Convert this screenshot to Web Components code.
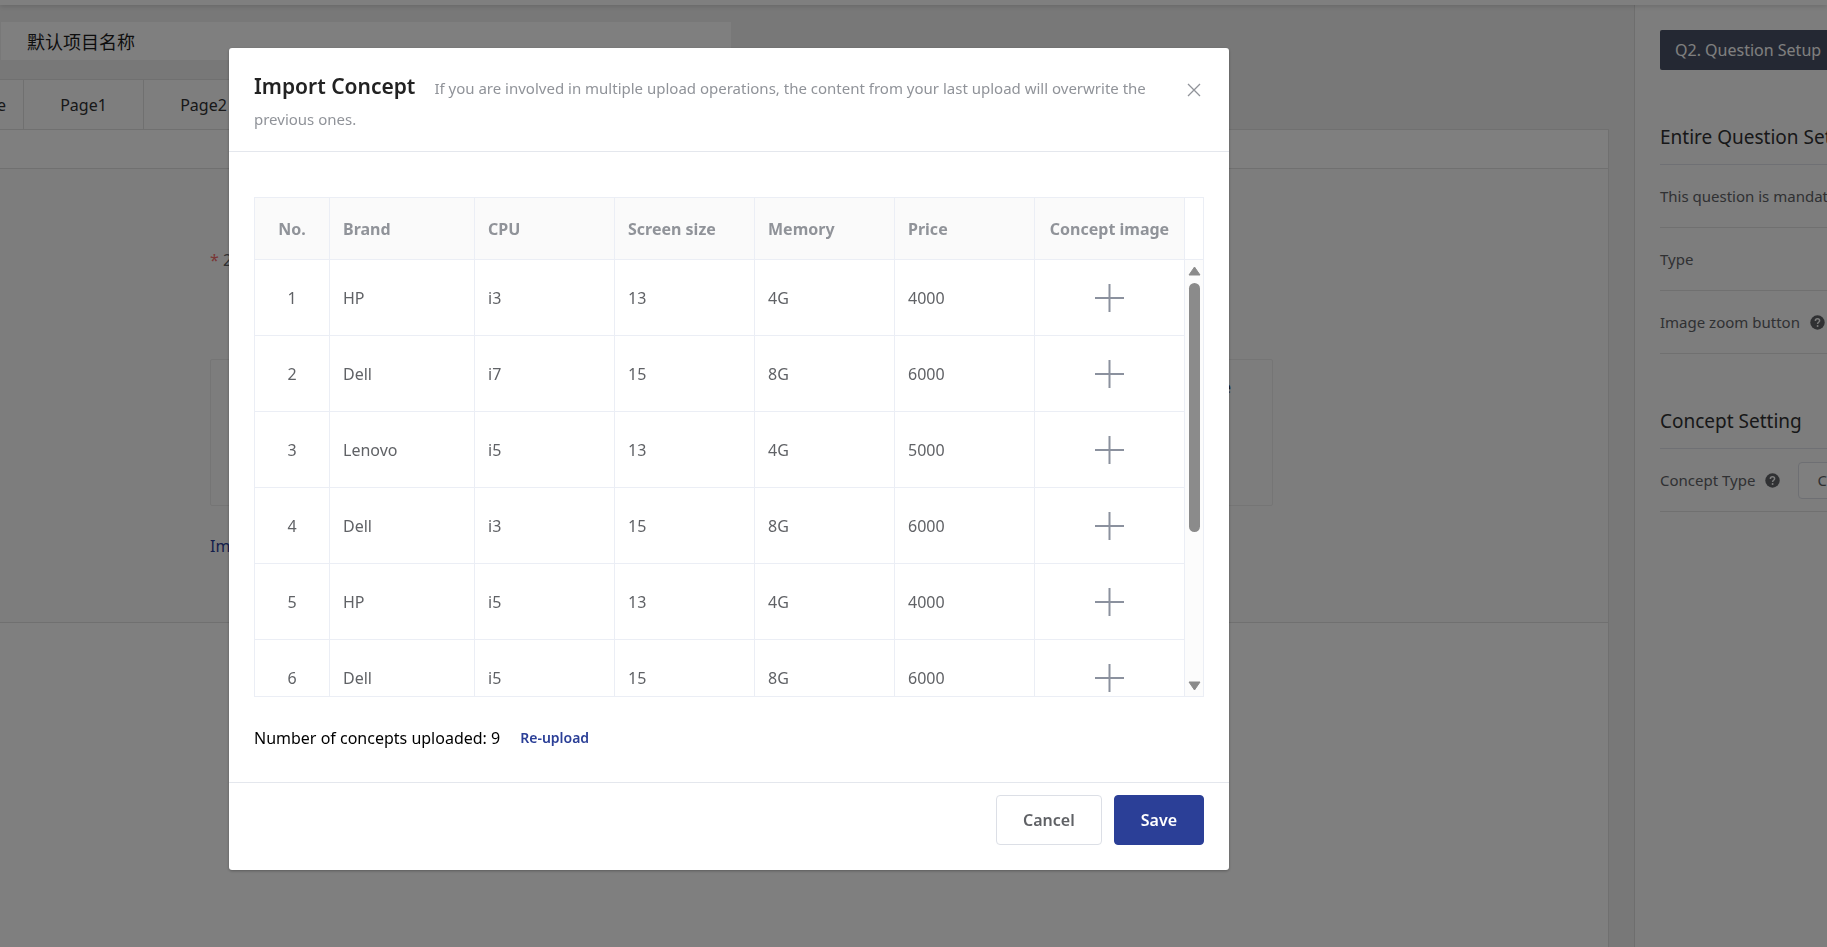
<!DOCTYPE html>
<html lang="en">
<head>
<meta charset="utf-8">
<title>Import Concept</title>
<style>
  html, body { margin: 0; }
  body {
    font: 16px/24px "Noto Sans", "Noto Sans CJK SC", sans-serif;
    color: #303133;
    background: #f0f0f0;
    overflow: hidden;
  }
</style>
</head>
<body>
<survey-app></survey-app>

<script>
const define = (name, html, setup) => {
  const template = document.createElement('template');
  template.innerHTML = html;
  customElements.define(name, class extends HTMLElement {
    constructor() {
      super();
      this.attachShadow({ mode: 'open' }).append(template.content.cloneNode(true));
    }
    connectedCallback() {
      if (setup) setup(this, this.shadowRoot);
    }
  });
};

/* Round question mark beside a setting label */
define('help-icon', `
  <style>
    :host { display: inline-flex; width: 15px; height: 15px; color: #606266; }
    svg { width: 100%; height: 100%; }
  </style>
  <svg viewBox="0 0 15 15" aria-hidden="true">
    <circle cx="7.5" cy="7.5" r="7.2" fill="currentColor"/>
    <path d="M5.4 5.9c0-1.3.9-2.1 2.1-2.1s2.1.8 2.1 1.9c0 1.5-2 1.6-2 3.2" fill="none" stroke="#fafafa" stroke-width="1.5"/>
    <circle cx="7.6" cy="11" r=".95" fill="#fafafa"/>
  </svg>`);

define('page-tabs', `
  <style>
    :host { display: flex; align-self: flex-start; border-top: 1px solid #e0e0e0; height: 49px; }
    a {
      box-sizing: border-box; width: 120px; flex: none;
      display: flex; align-items: center; justify-content: center;
      color: inherit; text-decoration: none;
      background: #fcfcfc; border-right: 1px solid #e0e0e0;
    }
    a.cut { width: 24px; justify-content: flex-end; padding-right: 17px; overflow: hidden; }
  </style>
  <a class="cut" href="#home">Home</a>
  <a href="#page1">Page1</a>
  <a href="#page2">Page2</a>`);

define('question-card', `
  <style>
    :host { display: flex; flex-direction: column; flex: 1; border: 1px solid #e0e0e0; border-width: 1px 1px 0 0; background: #fff; }
    header { height: 38px; border-bottom: 1px solid #e0e0e0; }
    section { background: #fafafa; border-bottom: 1px solid #e0e0e0; padding: 79px 335px 64px 210px; }
    p { margin: 0; color: #606266; }
    p b { color: #f56c6c; font-weight: 400; }
    .box {
      box-sizing: border-box; height: 147px; margin: 87px 0 28px; padding: 15px 41px;
      border: 1px solid #ebebeb; border-radius: 2px; text-align: right;
    }
    a { display: block; color: #2b3f97; text-decoration: none; }
  </style>
  <header></header>
  <section>
    <p><b>*</b> 2</p>
    <div class="box">Price</div>
    <a href="#import">Import</a>
  </section>`);

define('project-editor', `
  <style>
    :host { display: flex; flex-direction: column; flex: 1; min-width: 0; padding: 17px 25px 0 0; }
    input {
      box-sizing: border-box; width: 730px; max-width: 100%; height: 38px; margin: 0 0 19px 1px; padding: 0 26px;
      border: 0; background: #fff; color: #1c1c1c; font: inherit; font-size: 18px;
    }
  </style>
  <input type="text" aria-label="Project name" value="默认项目名称">
  <page-tabs></page-tabs>
  <question-card></question-card>`);

define('setting-row', `
  <style>
    :host {
      box-sizing: border-box; display: flex; align-items: center; height: 63px;
      border-bottom: 1px solid #e0e0e0; font-size: 15px; color: #606266;
    }
    slot { display: flex; align-items: center; gap: 10px; }
  </style>
  <slot></slot>`);

define('setting-section', `
  <style>
    :host { display: block; }
    h3 { margin: 0; padding-bottom: 12px; border-bottom: 1px solid #dfe0e8; font-size: 19px; line-height: 30px; font-weight: 400; }
  </style>
  <h3><slot name="title"></slot></h3>
  <slot></slot>`);

define('settings-panel', `
  <style>
    :host {
      box-sizing: border-box; flex: none; width: 193px; overflow: hidden; white-space: nowrap;
      border-left: 1px solid #dcdcdc; background: #fafafa;
    }
    .inner { width: 320px; padding: 25px; }
    .setup {
      display: block; width: 100%; height: 40px; margin-bottom: 52px; padding: 0 15px; text-align: left;
      border: 0; border-radius: 2px; background: #485066; color: #fff; font: inherit;
    }
    setting-section + setting-section { margin-top: 52px; }
    select {
      width: 160px; height: 37px; margin-left: 8px; padding: 0 18px; appearance: none;
      border: 1px solid #dcdfe6; border-radius: 4px; background: #fff; color: #606266; font: inherit;
    }
  </style>
  <div class="inner">
    <button class="setup" type="button">Q2. Question Setup</button>
    <setting-section>
      <span slot="title">Entire Question Setting</span>
      <setting-row>This question is mandatory</setting-row>
      <setting-row>Type</setting-row>
      <setting-row><span>Image zoom button</span><help-icon></help-icon></setting-row>
    </setting-section>
    <setting-section>
      <span slot="title">Concept Setting</span>
      <setting-row><label for="ctype">Concept Type</label><help-icon></help-icon>
        <select id="ctype"><option>Custom</option></select></setting-row>
    </setting-section>
  </div>`);

define('scroll-rail', `
  <style>
    :host { display: flex; flex-direction: column; }
    .cap { height: 61px; border-bottom: 1px solid #ebeef5; background: #fff; }
    .track {
      flex: 1; display: flex; flex-direction: column; align-items: center; justify-content: space-between;
      padding: 6px 0 5px; background: #fcfcfc;
    }
    .thumb { width: 11px; height: 249px; margin: 7px 0 auto; border-radius: 6px; background: #8b8b8b; }
    svg { width: 13px; height: 10px; fill: #8b8b8b; stroke: #8b8b8b; stroke-linejoin: round; }
  </style>
  <div class="cap"></div>
  <div class="track">
    <svg viewBox="0 0 13 10"><path d="M6.5 1 12 9H1z"/></svg>
    <div class="thumb"></div>
    <svg viewBox="0 0 13 10"><path d="M6.5 9 12 1H1z"/></svg>
  </div>`);

define('concept-table', `
  <style>
    :host {
      box-sizing: border-box; display: grid; grid-template-columns: 1fr 18px; height: 500px;
      border: 1px solid #ebeef5; background: #fff;
    }
    .view { overflow: hidden; }
    table { width: 100%; table-layout: fixed; border-collapse: separate; border-spacing: 0; color: #606266; }
    th, td {
      box-sizing: border-box; padding: 0 13px; text-align: left; white-space: nowrap;
      border: solid #ebeef5; border-width: 0 1px 1px 0;
    }
    th { height: 62px; background: #fafafa; color: #909399; font-weight: 700; }
    td { height: 76px; }
    .n { width: 75px; text-align: center; }
    .brand { width: 145px; }
    .img { width: 150px; text-align: center; }
    button { display: block; margin: 0 auto; padding: 0; border: 0; background: none; color: #8b919e; }
    svg { display: block; width: 30px; height: 30px; }
  </style>
  <div class="view">
    <table>
      <thead><tr>
        <th class="n">No.</th><th class="brand">Brand</th><th>CPU</th><th>Screen size</th>
        <th>Memory</th><th>Price</th><th class="img">Concept image</th>
      </tr></thead>
      <tbody></tbody>
    </table>
  </div>
  <scroll-rail></scroll-rail>`, (host, root) => {
  const concepts = [
    ['HP', 'i3', 13, '4G', 4000],
    ['Dell', 'i7', 15, '8G', 6000],
    ['Lenovo', 'i5', 13, '4G', 5000],
    ['Dell', 'i3', 15, '8G', 6000],
    ['HP', 'i5', 13, '4G', 4000],
    ['Dell', 'i5', 15, '8G', 6000],
  ];
  root.querySelector('tbody').innerHTML = concepts.map((row, i) => `<tr>
    <td class="n">${i + 1}</td>${row.map(v => `<td>${v}</td>`).join('')}
    <td class="img"><button type="button" aria-label="Add image">
      <svg viewBox="0 0 30 30"><path d="M0 15h29M14.500 1v28" stroke="currentColor" stroke-width="2"/></svg>
    </button></td></tr>`).join('');
});

define('dialog-button', `
  <style>
    :host { display: block; }
    button {
      height: 50px; padding: 0 26px; border: 1px solid #dcdfe6; border-radius: 4px;
      background: #fff; color: #606266; font: inherit; font-weight: 600;
    }
    :host([primary]) button { background: #2b3f97; border-color: #2b3f97; color: #fff; }
  </style>
  <button type="button"><slot></slot></button>`);

define('import-dialog', `
  <style>
    :host { display: block; background: #fff; border-radius: 3px; box-shadow: 0 1px 3px rgba(0, 0, 0, .3); }
    header { display: flex; align-items: flex-start; gap: 4px; padding: 23px 25px 18px; border-bottom: 1px solid #e4e7ed; }
    .title { flex: 1; font-size: 21px; line-height: 31px; }
    h2 { display: inline; margin: 0; padding-right: 19px; font-size: inherit; font-weight: 600; color: #222; }
    .note { font-size: 15px; line-height: 24px; color: #909399; }
    .close { width: 20px; height: 20px; margin-top: 9px; padding: 0; border: 0; background: none; color: #909399; }
    .close svg { display: block; width: 20px; height: 20px; }
    main { padding: 45px 25px 32px; }
    .count { display: flex; align-items: center; gap: 20px; margin-top: 29px; color: #000; }
    .count a { font-size: 14px; font-weight: 600; color: #2b3f97; text-decoration: none; }
    footer { display: flex; justify-content: flex-end; gap: 12px; padding: 12px 25px 25px; border-top: 1px solid #e4e7ed; }
  </style>
  <header>
    <div class="title"><h2>Import Concept</h2><span class="note">If you are involved in multiple upload operations, the content from your last upload will overwrite the previous ones.</span></div>
    <button class="close" type="button" aria-label="Close">
      <svg viewBox="0 0 20 20"><path d="M4 4l12 12M16 4L4 16" stroke="currentColor" stroke-width="1.3"/></svg>
    </button>
  </header>
  <main>
    <concept-table></concept-table>
    <div class="count"><span>Number of concepts uploaded: 9</span><a href="#reupload">Re-upload</a></div>
  </main>
  <footer>
    <dialog-button>Cancel</dialog-button>
    <dialog-button primary>Save</dialog-button>
  </footer>`);

define('survey-app', `
  <style>
    :host { display: flex; flex-direction: column; min-height: 100vh; }
    .top { position: relative; height: 5px; background: #fff; box-shadow: 0 1px 5px rgba(0, 0, 0, .16); }
    .work { flex: 1; display: flex; }
    .veil { position: fixed; inset: 0; padding: 48px 0 0 229px; background: rgba(0, 0, 0, .5); }
    import-dialog { width: 100%; max-width: 1000px; }
  </style>
  <div class="top"></div>
  <div class="work">
    <project-editor></project-editor>
    <settings-panel></settings-panel>
  </div>
  <div class="veil"><import-dialog role="dialog" aria-label="Import Concept"></import-dialog></div>`);
</script>
</body>
</html>
